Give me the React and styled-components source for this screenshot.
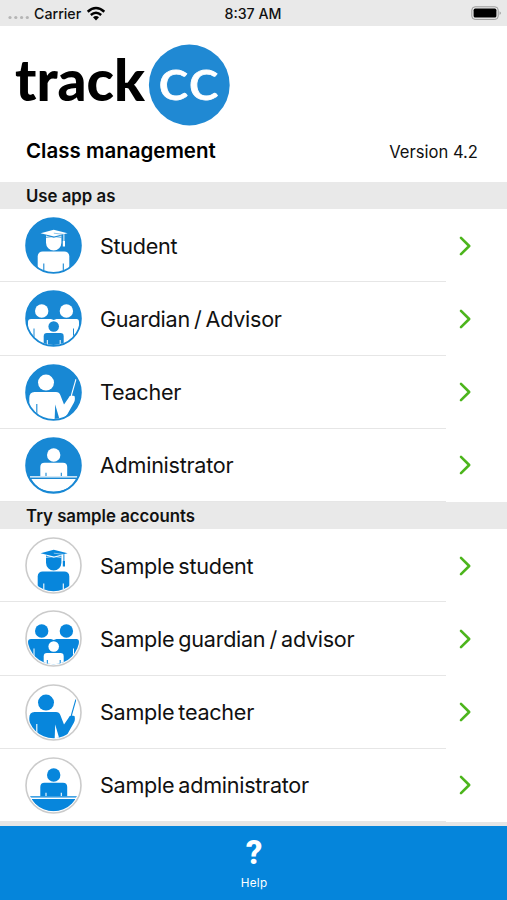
import React, { useId } from "react";
import styled, { createGlobalStyle } from "styled-components";

const accounts = [
  { id: 1, label: "Student", icon: "student" },
  { id: 2, label: "Guardian / Advisor", icon: "guardian" },
  { id: 3, label: "Teacher", icon: "teacher" },
  { id: 4, label: "Administrator", icon: "admin" },
];

const samples = [
  { id: 1, label: "Sample student", icon: "student" },
  { id: 2, label: "Sample guardian / advisor", icon: "guardian" },
  { id: 3, label: "Sample teacher", icon: "teacher" },
  { id: 4, label: "Sample administrator", icon: "admin" },
];

const GlobalStyle = createGlobalStyle`
  body {
    margin: 0;
    background-color: #fff;
  }
`;

const Screen = styled.div`
  display: flex;
  flex-direction: column;
  width: 507px;
  height: 900px;
  overflow: hidden;
  background-color: #fff;
  color: #111;
  font-family: Inter, "Liberation Sans", sans-serif;
`;

const StatusBar = styled.div`
  display: grid;
  grid-template-columns: 1fr auto 1fr;
  align-items: center;
  flex: none;
  height: 26px;
  padding: 0 5px 0 8px;
  background-color: #e9e9e9;
  font-size: 14.2px;
  line-height: 17px;
  font-weight: 500;
`;

const Carrier = styled.div`
  display: flex;
  align-items: center;
  gap: 5px;
`;

const Clock = styled.span`
  padding-right: 4px;
`;

const Battery = styled.svg`
  justify-self: end;
`;

const Header = styled.header`
  display: flex;
  flex-direction: column;
  flex: none;
  height: 156px;
`;

const Logo = styled.svg`
  display: block;
  flex: none;
`;

const TitleRow = styled.div`
  display: flex;
  justify-content: space-between;
  align-items: baseline;
  padding: 10px 29px 0 26px;
`;

const Title = styled.h1`
  margin: 0;
  font-size: 20.5px;
  line-height: 28px;
  font-weight: 600;
  color: #000;
`;

const Version = styled.span`
  font-size: 16.6px;
`;

const SectionTitle = styled.h2`
  flex: none;
  height: 27px;
  margin: 0;
  padding-left: 26px;
  background-color: #e9e9e9;
  font-size: 16.8px;
  line-height: 29px;
  font-weight: 600;
`;

const List = styled.div`
  display: grid;
  grid-template-rows: repeat(4, 1fr);
  flex: none;
  height: 293px;
`;

const Row = styled.div`
  display: flex;
  justify-content: space-between;
  padding-right: 35px;
`;

const RowMain = styled.div`
  display: flex;
  align-items: center;
  gap: 18px;
  width: 421px;
  padding: 1px 0 0 25px;
  border-bottom: 1px solid #e6e6e6;
`;

const Label = styled.span`
  font-size: 21.6px;
  line-height: 28px;
  letter-spacing: -0.28px;
  word-spacing: -1.7px;
`;

const Chevron = styled.svg`
  align-self: center;
`;

const Footer = styled.footer`
  display: flex;
  flex-direction: column;
  align-items: center;
  flex: 1;
  padding-left: 1px;
  border-top: 4px solid #e6e6e6;
  background-color: #0585db;
  color: #fff;
`;

const HelpMark = styled.div`
  margin-top: 8px;
  font-family: Roboto, sans-serif;
  font-size: 33px;
  line-height: 37px;
  font-weight: 800;
`;

const HelpLabel = styled.div`
  margin-top: 4px;
  font-size: 11.7px;
  line-height: 16px;
  letter-spacing: 0.3px;
`;

const figures = {
  student: (fg, bg) => (
    <>
      <path d="M21 18.6V25.8a7.7 7.7 0 0 0 15.4 0V18.6L28.8 20.8Z" fill={fg} />
      <path d="M21 20.3Q28.7 18.6 36.4 20.3" stroke={bg} strokeWidth=".8" fill="none" />
      <path d="M15.6 16.3 28.7 12.7 42.6 16.2 29 19.6Z" fill={fg} />
      <path d="M28.8 16.2 38.8 17.4V27" stroke={bg} strokeWidth=".5" fill="none" />
      <path d="M38.9 17.2V25" stroke={fg} strokeWidth="1" />
      <path d="M38.9 24V29.6" stroke={fg} strokeWidth="2.2" />
      <rect x="12.7" y="34.4" width="31.6" height="26" rx="5" fill={fg} />
      <path d="M18.8 46.5V57M38.3 46.5V57" stroke={bg} strokeWidth="1.1" />
    </>
  ),
  guardian: (fg, bg) => (
    <>
      <circle cx="16.7" cy="21" r="6.7" fill={fg} />
      <circle cx="41.4" cy="21" r="6.7" fill={fg} />
      <path d="M6 29H26L28.7 30 31.5 29H51.5Q54 29 54 32V57H3V32Q3 29 6 29Z" fill={fg} />
      <path d="M9 38.5V57M48.5 38.5V57" stroke={bg} strokeWidth="1" />
      <circle cx="28.7" cy="36.5" r="5.3" fill={bg} />
      <rect x="18.7" y="43" width="20" height="18" rx="3.2" fill={bg} />
      <path d="M22.3 50V57M35.2 50V57" stroke={fg} strokeWidth="1" />
    </>
  ),
  teacher: (fg, bg) => (
    <>
      <circle cx="21" cy="18.6" r="8" fill={fg} />
      <path
        d="M9.5 28H31Q34.3 28 35.3 31L39 40.5 43.5 34Q44 31.5 46.5 31.5L49.5 32Q50.5 35.5 49 38.5L42.5 50 37 57H4.3V34Q4.3 28 9.5 28Z"
        fill={fg}
      />
      <path d="M11.8 40V57" stroke={bg} strokeWidth="1.1" />
      <path d="M30.2 40.5 29.6 57H35Z" fill={bg} />
      <path d="M46.2 32 51 15.2" stroke={fg} strokeWidth="1.1" />
    </>
  ),
  admin: (fg, bg) => (
    <>
      <circle cx="28.7" cy="18" r="6.7" fill={fg} />
      <path d="M19.5 25.7H38Q42.2 25.7 42.2 30V39.2H15.3V30Q15.3 25.7 19.5 25.7Z" fill={fg} />
      <path d="M21 35.8V39.2M36.3 35.8V39.2" stroke={bg} strokeWidth="1.1" />
      <path d="M5 39.9H52.2" stroke={fg} strokeWidth="1.2" />
      <path d="M6.4 41.9H50.8Q44 54.4 28.6 54.4T6.4 41.9Z" fill={fg} />
    </>
  ),
};

const RoleIcon = ({ name, outlined }) => {
  const clipId = useId();
  const fg = outlined ? "#0786dc" : "#fff";
  const bg = outlined ? "#fff" : "#1888d4";

  return (
    <svg width="57" height="57" viewBox="0 0 57 57">
      <clipPath id={clipId}>
        <circle cx="28.5" cy="28.5" r={outlined ? 25.8 : 26.5} />
      </clipPath>
      <circle
        cx="28.5"
        cy="28.5"
        r="27.5"
        fill={bg}
        stroke={outlined ? "#cbcbcb" : bg}
        strokeWidth="1.6"
      />
      <g clipPath={`url(#${clipId})`}>{figures[name](fg, bg)}</g>
    </svg>
  );
};

const RoleList = ({ items, outlined }) => (
  <List>
    {items.map((item) => (
      <Row key={item.id}>
        <RowMain>
          <RoleIcon name={item.icon} outlined={outlined} />
          <Label>{item.label}</Label>
        </RowMain>
        <Chevron width="14" height="22" viewBox="0 0 14 22">
          <path
            d="M3 2.8 11.2 11 3 19.2"
            fill="none"
            stroke="#4cb51c"
            strokeWidth="2.6"
            strokeLinecap="round"
            strokeLinejoin="round"
          />
        </Chevron>
      </Row>
    ))}
  </List>
);

const App = () => {
  return (
    <>
      <GlobalStyle />
      <Screen>
        <StatusBar>
          <Carrier>
            <svg width="21" height="16" viewBox="0 0 21 16" fill="#b5b5b5">
              <circle cx="2" cy="12.5" r="1.6" />
              <circle cx="7.8" cy="12.5" r="1.6" />
              <circle cx="13.6" cy="12.5" r="1.6" />
              <circle cx="19.3" cy="12.5" r="1.6" />
            </svg>
            <span>Carrier</span>
            <svg width="20" height="15" viewBox="0 0 20 15" fill="none" stroke="#000">
              <path d="M1.7 5.7Q10 -1.8 18.3 5.7" strokeWidth="2.5" />
              <path d="M4.8 9Q10 4.4 15.2 9" strokeWidth="2.4" />
              <path d="M7 11.3Q10 8.8 13 11.3L10 14.4Z" fill="#000" stroke="none" />
            </svg>
          </Carrier>
          <Clock>8:37 AM</Clock>
          <Battery width="32" height="16" viewBox="0 0 32 16">
            <rect x="1.8" y="1.8" width="26.4" height="12.6" rx="3.3" fill="none" stroke="#999" />
            <rect x="3.6" y="3.6" width="22.8" height="9" rx="1.6" fill="#000" />
            <path d="M29.6 6.2Q32.2 8.1 29.6 10Z" fill="#999" />
          </Battery>
        </StatusBar>

        <Header>
          <Logo width="240" height="101" viewBox="0 0 240 101">
            <circle cx="189.3" cy="59" r="40.4" fill="#2089d3" />
            <text
              x="15"
              y="74.6"
              textLength="130"
              lengthAdjust="spacingAndGlyphs"
              fontFamily="Lato, sans-serif"
              fontWeight="900"
              fontSize="57"
              fill="#000"
            >
              track
            </text>
            <text
              x="158"
              y="74.2"
              textLength="61"
              lengthAdjust="spacingAndGlyphs"
              fontFamily="Lato, sans-serif"
              fontWeight="400"
              fontSize="59"
              fill="#fff"
              stroke="#fff"
              strokeWidth="0.8"
            >
              cc
            </text>
          </Logo>
          <TitleRow>
            <Title>Class management</Title>
            <Version>Version 4.2</Version>
          </TitleRow>
        </Header>

        <SectionTitle>Use app as</SectionTitle>
        <RoleList items={accounts} />
        <SectionTitle>Try sample accounts</SectionTitle>
        <RoleList items={samples} outlined />

        <Footer>
          <HelpMark>?</HelpMark>
          <HelpLabel>Help</HelpLabel>
        </Footer>
      </Screen>
    </>
  );
};

export default App;
